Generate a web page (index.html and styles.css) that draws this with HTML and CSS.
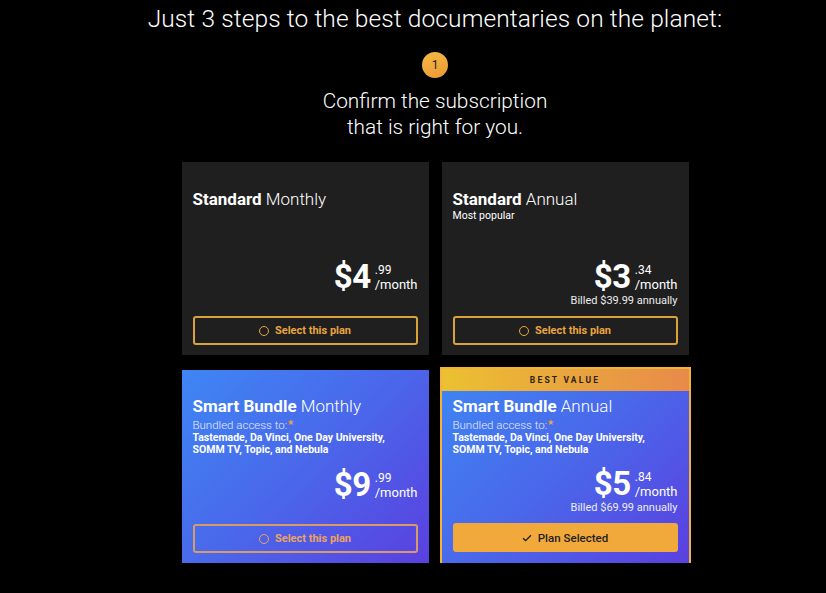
FILE: index.html
```html
<!DOCTYPE html>
<html lang="en">

<head>
    <meta charset="UTF-8">
    <meta name="viewport" content="width=device-width, initial-scale=1.0">
    <title>Choose your plan</title>
    <link rel="stylesheet" href="styles.css">
</head>

<body>
    <main class="page">
        <h1 class="headline">Just 3 steps to the best documentaries on the planet:</h1>
        <div class="step">1</div>
        <p class="lead">Confirm the subscription<br>that is right for you.</p>

        <section class="plans">
            <div class="plan">
                <h2 class="plan-name"><b>Standard</b> Monthly</h2>
                <div class="spacer"></div>
                <div class="price">
                    <span class="whole">$4</span>
                    <span class="fraction"><span class="cents">.99</span><span class="per">/month</span></span>
                </div>
                <div class="billed"></div>
                <button class="select-btn"><span class="ring"></span>Select this plan</button>
            </div>

            <div class="plan">
                <h2 class="plan-name"><b>Standard</b> Annual</h2>
                <div class="tag">Most popular</div>
                <div class="spacer"></div>
                <div class="price">
                    <span class="whole">$3</span>
                    <span class="fraction"><span class="cents">.34</span><span class="per">/month</span></span>
                </div>
                <div class="billed">Billed $39.99 annually</div>
                <button class="select-btn"><span class="ring"></span>Select this plan</button>
            </div>

            <div class="plan bundle">
                <h2 class="plan-name"><b>Smart Bundle</b> Monthly</h2>
                <div class="access">Bundled access to:<sup class="star">&#9733;</sup></div>
                <div class="channels">Tastemade, Da Vinci, One Day University,<br>SOMM TV, Topic, and Nebula</div>
                <div class="spacer"></div>
                <div class="price">
                    <span class="whole">$9</span>
                    <span class="fraction"><span class="cents">.99</span><span class="per">/month</span></span>
                </div>
                <div class="billed"></div>
                <button class="select-btn"><span class="ring"></span>Select this plan</button>
            </div>

            <div class="plan bundle selected">
                <div class="ribbon">BEST VALUE</div>
                <h2 class="plan-name"><b>Smart Bundle</b> Annual</h2>
                <div class="access">Bundled access to:<sup class="star">&#9733;</sup></div>
                <div class="channels">Tastemade, Da Vinci, One Day University,<br>SOMM TV, Topic, and Nebula</div>
                <div class="spacer"></div>
                <div class="price">
                    <span class="whole">$5</span>
                    <span class="fraction"><span class="cents">.84</span><span class="per">/month</span></span>
                </div>
                <div class="billed">Billed $69.99 annually</div>
                <button class="select-btn chosen">
                    <svg width="10" height="8" viewBox="0 0 10 8"><path d="M1 4.2 L3.6 6.6 L9 1.2" fill="none" stroke="#1d1d1d" stroke-width="1.3"/></svg>
                    Plan Selected
                </button>
            </div>
        </section>
    </main>
</body>

</html>
```

FILE: styles.css
```css
* {
    margin: 0;
    padding: 0;
    box-sizing: border-box;
}

body {
    background-color: #000;
    color: #fff;
    font-family: Roboto, "Liberation Sans", sans-serif;
}

.page {
    display: flex;
    flex-direction: column;
    align-items: center;
    padding: 3px 0 0 44px;
}

.headline {
    font-size: 24.5px;
    font-weight: 300;
    line-height: 32px;
    letter-spacing: 0.1px;
}

.step {
    width: 26px;
    height: 26px;
    margin-top: 17px;
    border-radius: 50%;
    background: linear-gradient(160deg, #f6bc42, #eb9736);
    color: #222;
    font-size: 12px;
    line-height: 26px;
    text-align: center;
}

.lead {
    margin-top: 10px;
    font-size: 20.8px;
    font-weight: 300;
    line-height: 26px;
    text-align: center;
}

.plans {
    display: grid;
    grid-template-columns: 247px 247px;
    grid-auto-rows: 193px;
    gap: 15px 13px;
    margin-top: 22px;
}

.plan {
    display: flex;
    flex-direction: column;
    padding: 27px 11px 10px;
    background-color: #1f1f1f;
}

.plan-name {
    font-size: 17px;
    font-weight: 300;
    line-height: 20px;
}

.plan-name b {
    font-weight: 700;
}

.tag {
    font-size: 10.5px;
    font-weight: 400;
    line-height: 14px;
}

.spacer {
    flex: 1;
}

.price {
    display: flex;
    justify-content: flex-end;
    align-items: flex-end;
}

.whole {
    font-size: 33px;
    font-weight: 700;
    line-height: 33px;
    letter-spacing: -0.5px;
}

.fraction {
    display: flex;
    flex-direction: column;
    margin-left: 4px;
    padding-bottom: 1px;
}

.cents {
    font-size: 12px;
    line-height: 13px;
}

.per {
    font-size: 13px;
    line-height: 15px;
}

.billed {
    height: 15px;
    margin: 0 0 8px;
    font-size: 11px;
    font-weight: 400;
    line-height: 15px;
    text-align: right;
    color: #ededed;
}

.select-btn {
    display: flex;
    align-items: center;
    justify-content: center;
    gap: 6px;
    height: 29px;
    border: 2px solid #d9a23b;
    border-radius: 3px;
    background: transparent;
    color: #e9a53f;
    font-family: Roboto, "Liberation Sans", sans-serif;
    font-size: 11px;
    font-weight: 700;
}

.ring {
    width: 10px;
    height: 10px;
    border: 1.3px solid #e9a53f;
    border-radius: 50%;
}

.bundle {
    background: linear-gradient(135deg, #3e86f4 0%, #4a67ea 50%, #5a40e0 100%);
    padding-top: 26px;
}

.bundle .select-btn {
    border-color: #d99a6a;
    color: #eda35c;
}

.bundle .ring {
    border-color: #eda35c;
}

.access {
    font-size: 11.5px;
    font-weight: 300;
    line-height: 14px;
    color: #e8eaff;
}

.star {
    font-size: 8px;
    color: #f0a03c;
    vertical-align: 4px;
}

.channels {
    font-size: 10.5px;
    font-weight: 700;
    line-height: 12px;
}

.bundle.selected {
    margin: -3px -2px;
    padding-top: 0;
    padding-bottom: 12px;
    border: 2px solid #f1b33c;
}

.ribbon {
    margin: 0 -11px 5px;
    height: 22px;
    background: linear-gradient(90deg, #ebc131, #e88a4a);
    color: #2a2418;
    font-size: 8.5px;
    font-weight: 700;
    letter-spacing: 2.2px;
    line-height: 22px;
    text-align: center;
}

.bundle .chosen {
    border: none;
    background-color: #f1a93b;
    color: #1d1d1d;
    font-weight: 500;
    font-size: 11.5px;
}
```
